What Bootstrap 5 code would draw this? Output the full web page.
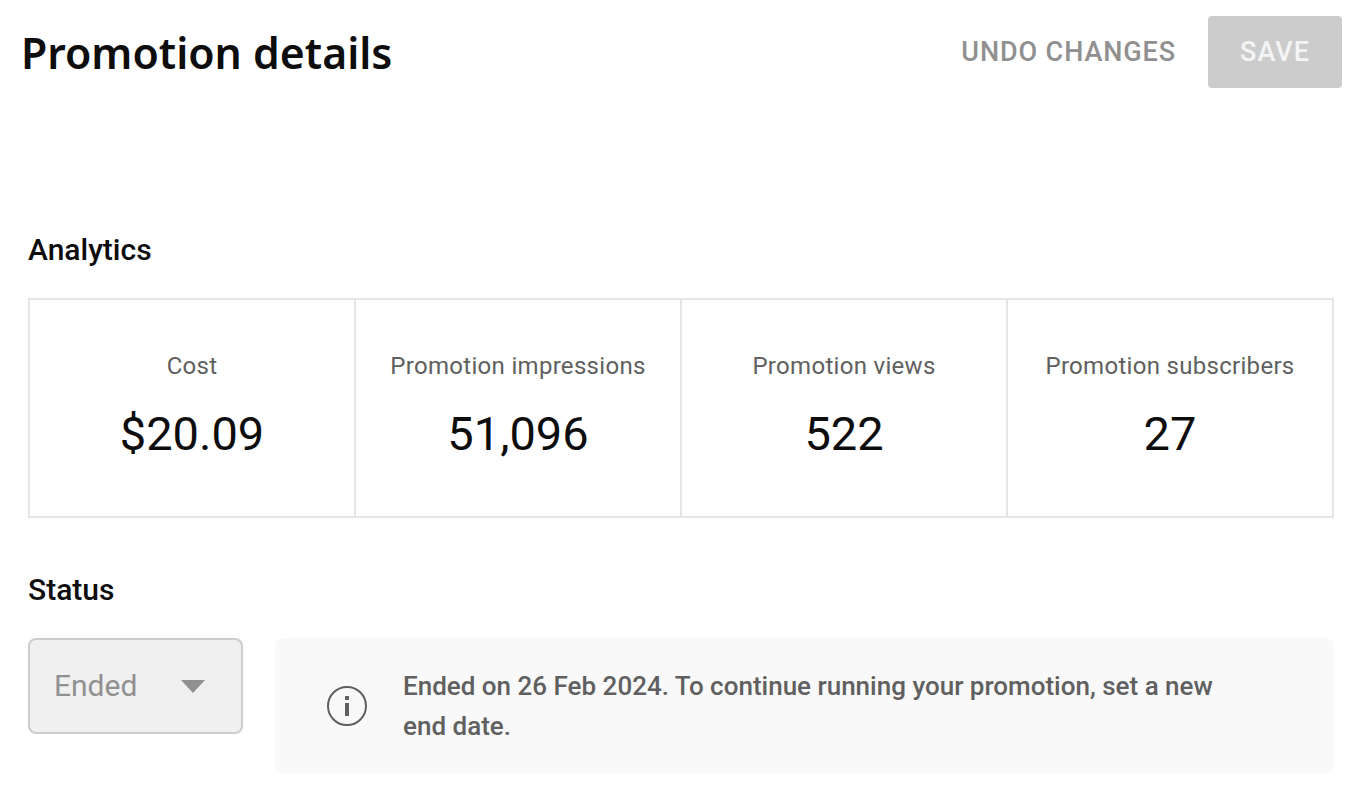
<!DOCTYPE html>
<html lang="en">
<head>
  <meta charset="UTF-8">
  <title>Promotion details</title>
  <link href="https://cdn.jsdelivr.net/npm/bootstrap@5.3.3/dist/css/bootstrap.min.css" rel="stylesheet">
  <style>
    body { font-family: Roboto, sans-serif; color: #0d0d0d; background: #fff; }
    .page-wrap { padding: 16px 24px 0 28px; }
    .page-title { font-family: "Noto Sans", sans-serif; font-weight: 600; font-size: 42.75px; line-height: 74px; margin: 0 0 0 -7px; }
    .btn-undo { font-size: 27px; font-weight: 500; color: #909090; line-height: 72px; margin-right: 32px; letter-spacing: .9px; }
    .btn-save { width: 134px; height: 72px; background: #cccccc; color: #f4f4f4; font-size: 27px; font-weight: 500; border-radius: 4px; border: 0; padding: 0; letter-spacing: 1px; }
    .sect-title { font-size: 30px; font-weight: 500; line-height: 36px; margin: 0; }
    .sect-analytics { margin-top: 142px; }
    .sect-status { margin-top: 54px; }
    .stat-grid { border: 2px solid #e5e5e5; height: 220px; margin-right: 8px; margin-top: 30px; }
    .stat-cell { flex: 1 1 0; min-width: 0; text-align: center; padding-top: 48px; }
    .stat-cell + .stat-cell { border-left: 2px solid #e5e5e5; }
    .stat-label { font-size: 24px; line-height: 36px; color: #606060; letter-spacing: .3px; }
    .stat-value { font-size: 47px; line-height: 60px; margin-top: 20px; }
    .status-row { margin-top: 30px; }
    .status-select { width: 215px; height: 96px; background: #f0f0f0; border: 2px solid #ccc; border-radius: 8px; padding: 0 36px 2px 24px; color: #909090; font-size: 30px; }
    .status-caret { width: 0; height: 0; border-left: 12px solid transparent; border-right: 12px solid transparent; border-top: 13px solid #909090; margin-top: 2px; }
    .status-note { width: 1059px; height: 135px; background: #f9f9f9; border-radius: 8px; padding-left: 52px; color: #606060; margin-left: 32px; gap: 36px; }
    .status-text { font-size: 26px; font-weight: 500; line-height: 40px; width: 840px; }
  </style>
</head>
<body>
  <div class="page-wrap">
    <div class="d-flex justify-content-between align-items-start">
      <h1 class="page-title">Promotion details</h1>
      <div class="d-flex">
        <span class="btn-undo">UNDO CHANGES</span>
        <button class="btn-save" type="button">SAVE</button>
      </div>
    </div>

    <h2 class="sect-title sect-analytics">Analytics</h2>
    <div class="stat-grid d-flex">
      <div class="stat-cell"><div class="stat-label">Cost</div><div class="stat-value">$20.09</div></div>
      <div class="stat-cell"><div class="stat-label">Promotion impressions</div><div class="stat-value">51,096</div></div>
      <div class="stat-cell"><div class="stat-label">Promotion views</div><div class="stat-value">522</div></div>
      <div class="stat-cell"><div class="stat-label">Promotion subscribers</div><div class="stat-value">27</div></div>
    </div>

    <h2 class="sect-title sect-status">Status</h2>
    <div class="status-row d-flex align-items-start">
      <div class="status-select d-flex align-items-center justify-content-between">
        <span>Ended</span>
        <span class="status-caret"></span>
      </div>
      <div class="status-note d-flex align-items-center">
        <svg width="40" height="40" viewBox="0 0 40 40" fill="none" aria-hidden="true">
          <circle cx="20" cy="20" r="19" stroke="#606060" stroke-width="2"/>
          <rect x="18" y="10" width="4" height="4" fill="#606060"/>
          <rect x="18" y="17" width="4" height="13" fill="#606060"/>
        </svg>
        <div class="status-text">Ended on 26 Feb 2024. To continue running your promotion, set a new end date.</div>
      </div>
    </div>
  </div>
</body>
</html>
